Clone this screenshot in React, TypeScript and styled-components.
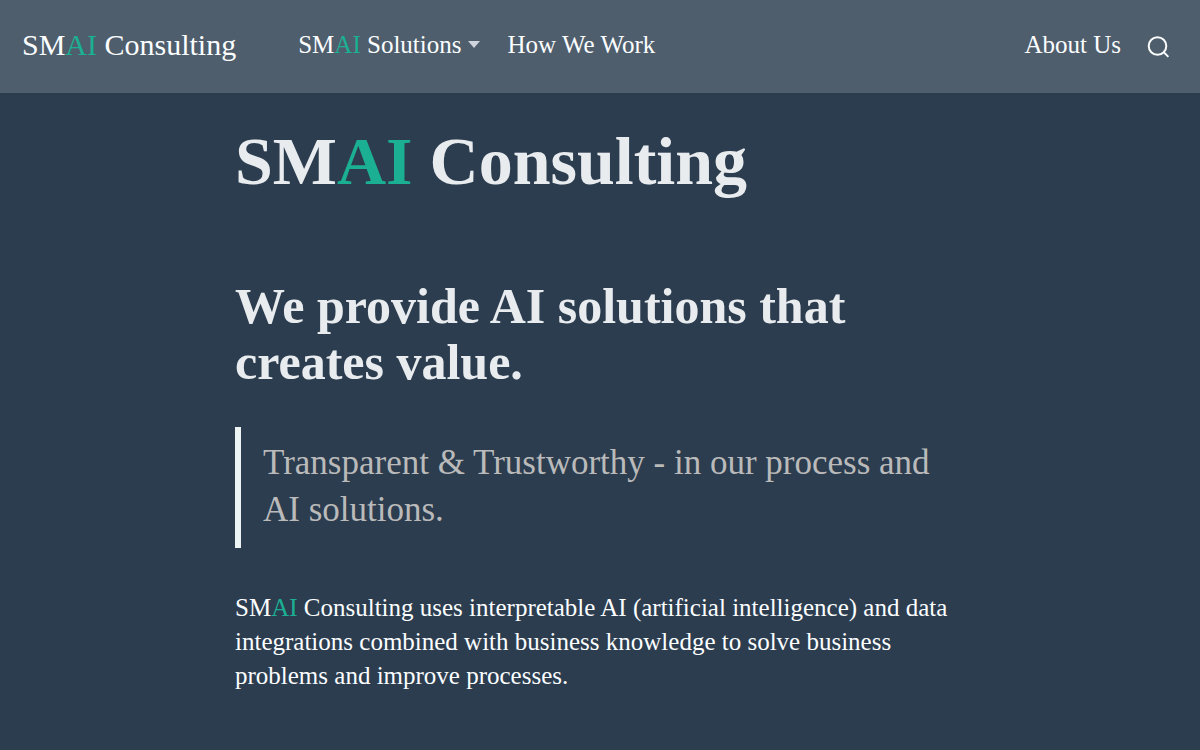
import React from "react";
import styled, { createGlobalStyle } from "styled-components";

const GlobalStyle = createGlobalStyle`
  * { box-sizing: border-box; }
  body {
    margin: 0;
    background: #2c3d4f;
    color: #fbfdff;
    font-family: "Liberation Serif", serif;
    font-size: 25px;
    line-height: 34px;
  }
`;

const Header = styled.header`
  display: flex;
  align-items: center;
  padding: 22px 30px 26px 22px;
  background: #4f5e6c;
`;

const Brand = styled.a`
  margin-right: 62px;
  color: inherit;
  font-size: 30px;
  line-height: 45px;
  text-decoration: none;
`;

const Nav = styled.nav`
  display: flex;
  flex: 1;
  align-items: center;
  gap: 27px;
`;

const NavLink = styled.a`
  color: inherit;
  text-decoration: none;
`;

const MenuButton = styled.button`
  display: flex;
  align-items: center;
  gap: 7px;
  padding: 0;
  border: 0;
  background: none;
  color: inherit;
  font: inherit;
  cursor: pointer;
`;

const Caret = styled.span`
  border: 6px solid transparent;
  border-top: 7px solid #d0d4dd;
  border-bottom: 0;
`;

const SearchButton = styled.button`
  display: flex;
  padding: 4px 0 0;
  border: 0;
  background: none;
  color: inherit;
  cursor: pointer;
`;

const EndGroup = styled.div`
  display: flex;
  align-items: center;
  gap: 26px;
  margin-left: auto;
`;

const Accent = styled.span`
  color: #1bb093;
`;

const Main = styled.main`
  max-width: 730px;
  margin: 0 auto;
  padding: 28px 0 56px;
`;

const Title = styled.h1`
  margin: 0 0 77px;
  color: #e9ecef;
  font-size: 68px;
  line-height: 80px;
`;

const Subtitle = styled.h2`
  margin: 0 0 37px;
  color: #e9ecef;
  font-size: 50px;
  line-height: 56px;
`;

const Quote = styled.blockquote`
  margin: 0 0 43px;
  padding: 12px 0 15px 22px;
  border-left: 6px solid #edf5f4;
  color: #bababa;
  font-size: 35px;
  line-height: 47px;
`;

const Text = styled.p`
  margin: 0;
`;

const BrandName = () => (
  <>
    SM<Accent>AI</Accent>
  </>
);

export default function App() {
  return (
    <>
      <GlobalStyle />
      <Header>
        <Brand href="#">
          <BrandName /> Consulting
        </Brand>
        <Nav aria-label="Main">
          <MenuButton type="button" aria-haspopup="true">
            <span>
              <BrandName /> Solutions
            </span>
            <Caret />
          </MenuButton>
          <NavLink href="#how">How We Work</NavLink>
          <EndGroup>
            <NavLink href="#about">About Us</NavLink>
            <SearchButton type="button" aria-label="Search">
              <svg width="23" height="23" viewBox="0 0 23 23" fill="none" stroke="currentColor" strokeWidth="2">
                <circle cx="10.5" cy="11" r="8.8" />
                <path d="M16.4 16.9L21.4 21.9" />
              </svg>
            </SearchButton>
          </EndGroup>
        </Nav>
      </Header>
      <Main>
        <Title>
          <BrandName /> Consulting
        </Title>
        <Subtitle>We provide AI solutions that creates value.</Subtitle>
        <Quote>Transparent &amp; Trustworthy - in our process and AI solutions.</Quote>
        <Text>
          <BrandName /> Consulting uses interpretable AI (artificial intelligence) and data integrations combined
          with business knowledge to solve business problems and improve processes.
        </Text>
      </Main>
    </>
  );
}
